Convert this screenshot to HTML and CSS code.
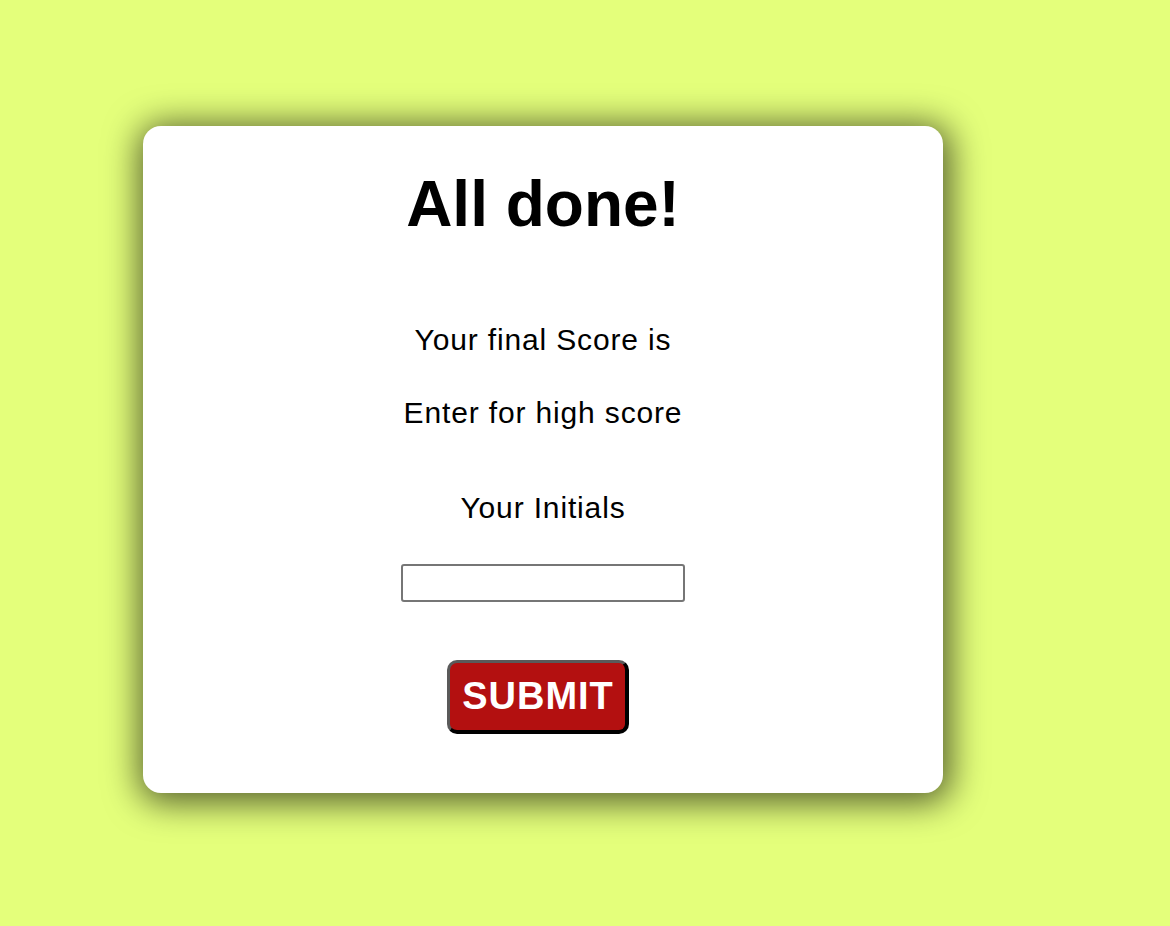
FILE: index.html
```html
<!DOCTYPE html>
<html lang="en">
<head>
<meta charset="utf-8">
<title>All done!</title>
<link rel="stylesheet" href="styles.css">
</head>
<body>
<main class="page">
  <section class="card">
    <h1 class="title">All done!</h1>
    <p class="line score">Your final Score is</p>
    <p class="line enter">Enter for high score</p>
    <label class="line initials" for="initials">Your Initials</label>
    <input class="field" id="initials" type="text">
    <button class="submit" type="button">SUBMIT</button>
  </section>
</main>
</body>
</html>
```
FILE: styles.css
```css
html, body {
  margin: 0;
  padding: 0;
}
html {
  background: #e4ff7b;
}
body {
  min-height: 926px;
  background: #e4ff7b;
  font-family: "Liberation Sans", Arial, Helvetica, sans-serif;
  color: #000;
}
.page {
  padding: 126px 0 133px 143px;
}
.card {
  width: 800px;
  height: 667px;
  box-sizing: border-box;
  padding-top: 41px;
  background: #fff;
  border-radius: 18px;
  box-shadow: 2px 4px 34px 6px rgba(0, 0, 0, 0.62);
  display: flex;
  flex-direction: column;
  align-items: center;
  text-align: center;
}
.title {
  margin: 0;
  font-size: 64px;
  line-height: 74px;
  font-weight: bold;
}
.line {
  display: block;
  margin: 0;
  font-size: 30px;
  line-height: 35px;
  letter-spacing: 0.85px;
}
.score { margin-top: 81px; }
.enter { margin-top: 38px; }
.initials { margin-top: 60px; }
.field {
  margin-top: 39px;
  width: 284px;
  height: 38px;
  box-sizing: border-box;
  border: 2px solid #767676;
  border-radius: 3px;
  background: #fff;
  padding: 0 4px;
  font-size: 16px;
}
.submit {
  margin-top: 58px;
  margin-right: 10px;
  width: 182px;
  height: 74px;
  box-sizing: border-box;
  padding: 0;
  background: #b31010;
  color: #fff;
  font-family: "Liberation Sans", Arial, Helvetica, sans-serif;
  font-weight: bold;
  font-size: 38px;
  letter-spacing: 1px;
  text-indent: 1px;
  border-style: solid;
  border-width: 3px 4px 4px 3px;
  border-color: #5a5a5a #000 #000 #5a5a5a;
  border-radius: 10px;
}
```
